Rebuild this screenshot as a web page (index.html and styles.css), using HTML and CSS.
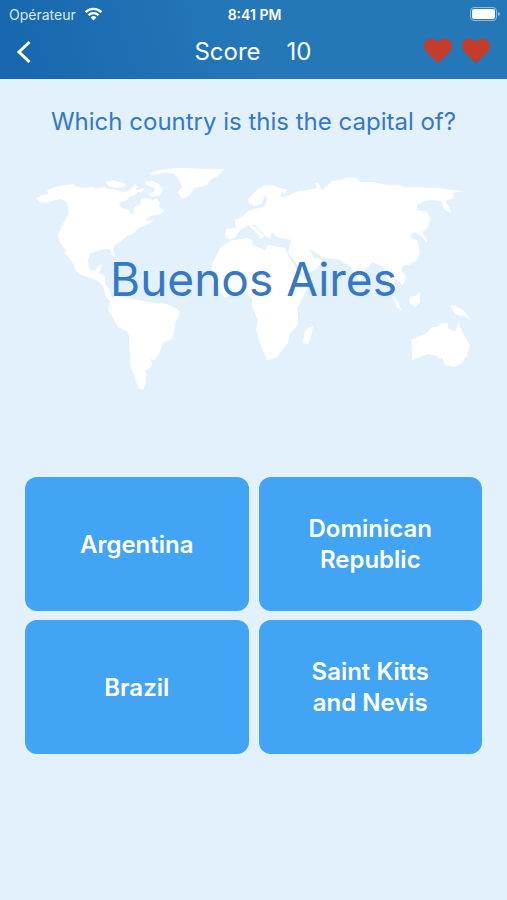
FILE: index.html
```html
<!DOCTYPE html>
<html lang="en">
<head>
    <meta charset="UTF-8">
    <meta name="viewport" content="width=device-width, initial-scale=1.0">
    <title>Capitals Quiz</title>
    <link rel="stylesheet" href="styles.css">
</head>
<body>
    <header>
        <div class="status-bar">
            <div class="carrier">
                <span>Opérateur</span>
                <svg class="wifi" viewBox="0 0 20 15" aria-hidden="true">
                    <path d="M1.500 5.500a12 12 0 0 1 17 0M4.600 8.800a7.600 7.600 0 0 1 10.800 0" fill="none" stroke="#fff" stroke-width="2.500"/>
                    <path d="M10 14.500l-3.100-3.200a4.400 4.400 0 0 1 6.200 0z" fill="#fff"/>
                </svg>
            </div>
            <span class="time">8:41 PM</span>
            <svg class="battery" viewBox="0 0 30 14" aria-hidden="true">
                <rect x="0.5" y="0.5" width="26" height="13" rx="3.5" fill="none" stroke="#8fbce0"/>
                <rect x="2" y="2" width="23" height="10" rx="2" fill="#fff"/>
                <path d="M28 5v4q2-.6 2-2t-2-2z" fill="#8fbce0"/>
            </svg>
        </div>
        <div class="nav-bar">
            <button class="back-button" aria-label="Back">
                <svg viewBox="0 0 16 24" aria-hidden="true">
                    <path d="M13.500 3L3 13l10.500 10" fill="none" stroke="#fff" stroke-width="3"/>
                </svg>
            </button>
            <h1 class="score"><span>Score</span><span>10</span></h1>
            <div class="lives">
                <svg class="heart" viewBox="0 0 28 26" role="img" aria-label="Life">
                    <path d="M14 25.500L2.400 13.800C-.8 10.500-.6 5.500 2 2.800 5.400-.5 10.500-.4 14 3.800 17.500-.4 22.600-.5 26 2.800 28.600 5.500 28.800 10.500 25.600 13.800z"/>
                </svg>
                <svg class="heart" viewBox="0 0 28 26" role="img" aria-label="Life">
                    <path d="M14 25.500L2.400 13.800C-.8 10.500-.6 5.500 2 2.800 5.400-.5 10.500-.4 14 3.800 17.500-.4 22.600-.5 26 2.800 28.600 5.500 28.800 10.500 25.600 13.800z"/>
                </svg>
            </div>
        </div>
    </header>

    <main class="container">
        <h2 class="question">Which country is this the capital of?</h2>

        <div class="map-area">
            <svg class="map" viewBox="25 160 457 240" aria-hidden="true">
                <!-- North and Central America -->
                <path d="M36 198L42 195 49 194 47 191 52 188 58 186 66 185 74 184 77 187 86 188 92 187 95 189 103 187 110 189 117 190 122 192 128 191 132 188 135 184 137 187 136 190 140 190 135 195 129 197 127 200 121 202 119 205 122 208 129 210 131 215 134 212 134 207 140 205 141 199 148 198 151 200 157 199 160 203 159 207 164 211 160 214 151 216 145 220 149 221 154 219 149 224 138 228 134 233 127 236 120 242 114 246 113 250 115 256 112 255 110 249 104 249 97 251 90 254 88 260 89 267 92 271 96 270 98 266 102 265 99 273 105 276 105 284 109 289 112 298 117 298 112 303 106 297 103 286 98 281 90 278 80 274 75 270 74 265 70 259 65 253 65 249 60 242 58 235 61 227 66 219 69 213 67 203 62 199 55 200 47 203 39 202Z"/>
                <path d="M105 182L114 180 118 182 124 183 126 186 116 188 109 186ZM144 182L152 181 159 184 163 190 160 195 152 197 148 194 154 192 155 188 147 185ZM138 190L145 188 141 193Z"/>
                <!-- Greenland -->
                <path d="M150 174L154 172 160 170 175 168 185 168 205 169 224 169 218 176 210 180 207 185 195 188 190 194 187 197 183 199 180 196 178 192 182 187 180 182 177 177 174 174 165 172 155 175Z"/>
                <!-- South America -->
                <path d="M108 310L111 300 116 296 122 297 138 300 155 303 167 304 177 309 180 312 178 318 175 323 174 333 172 339 163 343 160 352 155 360 150 359 152 363 151 367 145 371 147 374 145 378 146 382 143 390 139 388 136 382 134 375 131 368 130 358 129 335 127 331 118 327 112 316Z"/>
                <!-- Europe and Asia -->
                <path d="M225 237L226 229 236 228 235 220 242 217 247 212 253 209 260 208 265 206 266 202 268 200 266 197 268 194 264 197 262 203 255 206 249 203 248 199 257 190 265 185 272 185 277 187 287 190 285 194 281 192 281 197 290 195 298 191 308 190 317 188 315 182 319 184 322 190 327 186 332 181 340 180 348 177 357 178 360 182 373 182 387 185 400 185 405 187 420 187 430 188 440 188 450 190 463 191 453 193 454 198 445 201 450 208 451 213 445 210 441 201 430 200 422 202 417 205 417 210 427 212 430 218 428 228 422 232 427 240 427 243 421 236 414 232 409 237 417 240 420 252 417 260 411 264 403 266 401 269 406 278 403 285 396 279 394 281 397 290 391 284 387 277 383 267 373 262 363 272 360 282 355 276 351 267 340 260 322 257 310 249 313 257 322 260 318 268 305 275 302 272 295 262 288 252 290 247 291 240 277 237 272 232 270 239 265 236 255 225 252 225 261 233 264 237 260 239 258 234 248 225 240 230 235 238 229 239Z"/>
                <!-- Africa -->
                <path d="M230 241L240 239 248 238 252 240 253 245 265 250 268 245 285 248 288 255 300 275 305 280 313 278 305 293 297 308 298 316 298 325 290 333 288 343 277 357 273 359 267 360 262 348 256 330 258 320 252 306 252 298 247 294 238 293 225 297 213 285 211 277 212 265 220 248Z"/>
                <path d="M313 326L310 327 305 331 304 336 303 343 308 344 311 336Z"/>
                <!-- South-east Asia and Oceania -->
                <path d="M391 295L398 301 402 312 397 307ZM420 292L420 302 415 307 409 303 410 297 415 296ZM450 305L456 306 463 310 471 320 463 315 460 316 455 314Z"/>
                <path d="M411 340L422 335 427 333 432 327 437 327 442 323 448 323 448 328 455 332 458 323 463 333 465 337 470 345 467 355 462 363 455 367 445 365 442 357 440 359 437 356 428 354 420 357 412 360 412 352Z"/>
            </svg>
            <p class="capital">Buenos Aires</p>
        </div>

        <div class="answers">
            <button>Argentina</button>
            <button>Dominican Republic</button>
            <button>Brazil</button>
            <button>Saint Kitts and&nbsp;Nevis</button>
        </div>
    </main>
</body>
</html>
```
FILE: styles.css
```css
* {
    margin: 0;
    padding: 0;
    box-sizing: border-box;
}

body {
    font-family: Inter, "Liberation Sans", sans-serif;
    background: #e3f1fc;
    color: #3578c6;
}

header {
    background: linear-gradient(75deg, #1766ae, #2478b8 50%, #2478b8);
    color: #fff;
    height: 79px;
}

/* Phone status line */
.status-bar {
    display: grid;
    grid-template-columns: 1fr auto 1fr;
    align-items: center;
    height: 28px;
    padding: 0 7px 0 9px;
    font-size: 14px;
}

.carrier {
    display: flex;
    align-items: center;
    gap: 8px;
    color: #d9e8f4;
}

.wifi {
    width: 19px;
    height: 14px;
}

.time {
    font-weight: 600;
}

.battery {
    width: 30px;
    height: 14px;
    justify-self: end;
}

.nav-bar {
    display: grid;
    grid-template-columns: 1fr auto 1fr;
    align-items: center;
    height: 46px;
    padding: 0 17px 0 16px;
}

.back-button {
    width: 16px;
    height: 24px;
    border: none;
    background: none;
    cursor: pointer;
}

.back-button svg {
    display: block;
    width: 16px;
    height: 24px;
}

.score {
    display: flex;
    gap: 26px;
    font-size: 24px;
    font-weight: 400;
}

.lives {
    display: flex;
    justify-self: end;
    gap: 10px;
}

.heart {
    width: 28px;
    height: 26px;
    fill: #c43c2c;
}

.container {
    padding: 26px 25px;
}

.question {
    font-size: 24px;
    font-weight: 400;
    line-height: 34px;
    text-align: center;
}

/* The capital's name is laid over the map */
.map-area {
    display: grid;
    align-items: center;
    margin: 21px 0 77px;
}

.map,
.capital {
    grid-area: 1 / 1;
}

.map {
    display: block;
    width: 100%;
    fill: #fff;
}

.capital {
    padding-bottom: 2px;
    font-size: 46px;
    text-align: center;
}

.answers {
    display: grid;
    grid-template-columns: 1fr 1fr;
    gap: 9px 10px;
}

.answers button {
    min-height: 134px;
    padding: 0 40px;
    border: none;
    border-radius: 12px;
    background: #42a4f5;
    color: #fff;
    font-family: inherit;
    font-size: 24px;
    font-weight: 600;
    line-height: 31px;
    cursor: pointer;
}
```
